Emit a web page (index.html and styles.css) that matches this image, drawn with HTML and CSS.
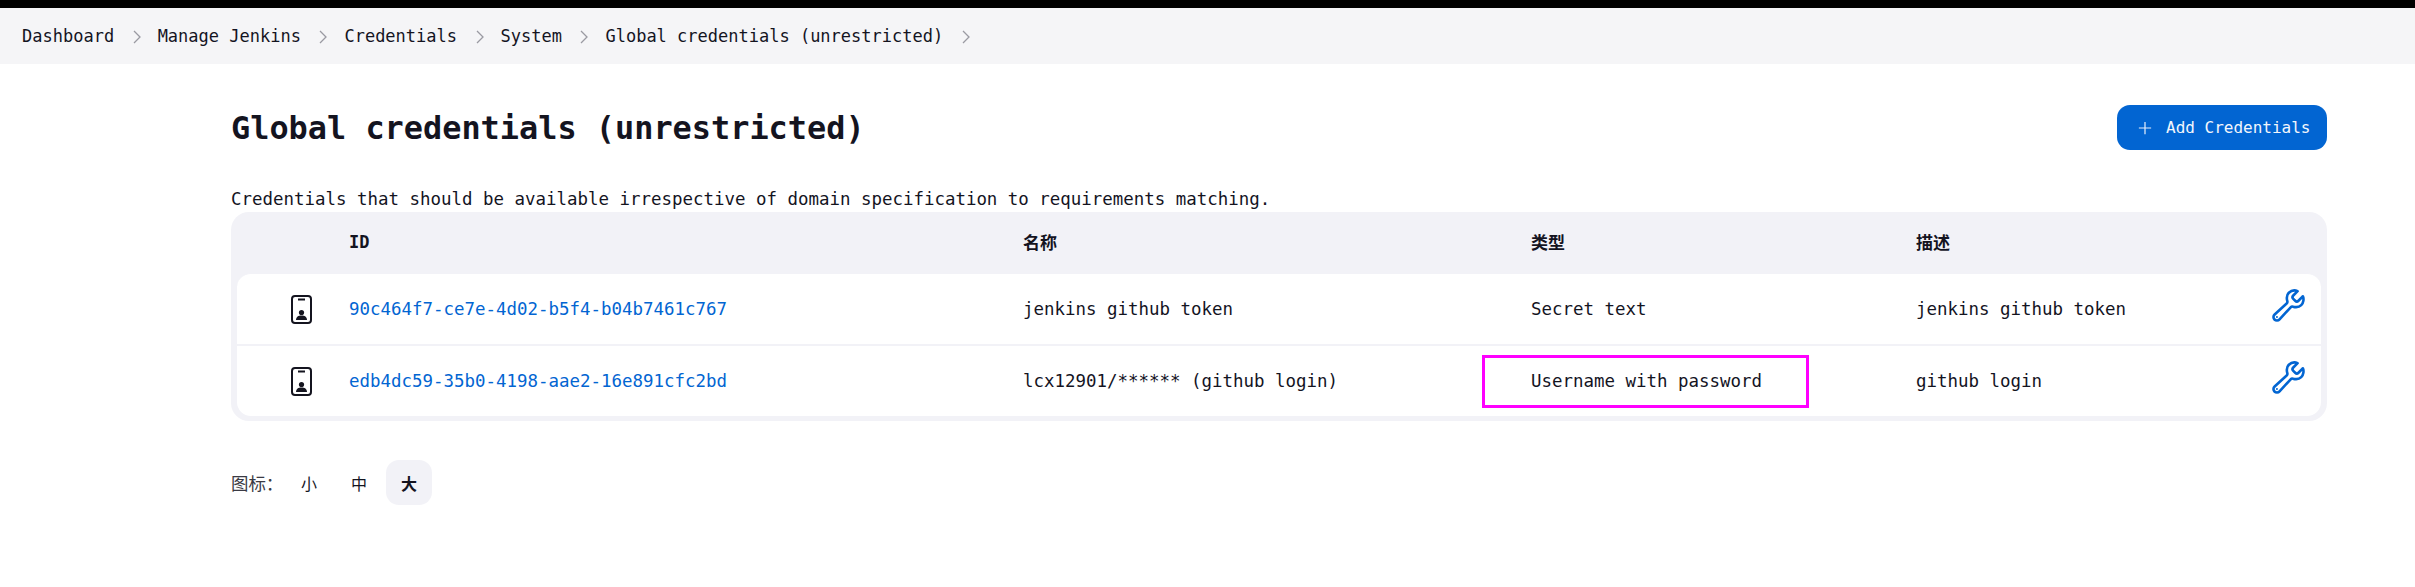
FILE: index.html
```html
<!DOCTYPE html>
<html>

<head>
    <title>Global credentials (unrestricted)</title>
    <link rel="stylesheet" href="styles.css">
</head>

<body>
    <div class="topbar"></div>

    <div class="breadcrumbs">
        <a>Dashboard</a>
        <svg class="crumb-arrow" viewBox="0 0 12 18"><path d="M3 3l6 6-6 6"/></svg>
        <a>Manage Jenkins</a>
        <svg class="crumb-arrow" viewBox="0 0 12 18"><path d="M3 3l6 6-6 6"/></svg>
        <a>Credentials</a>
        <svg class="crumb-arrow" viewBox="0 0 12 18"><path d="M3 3l6 6-6 6"/></svg>
        <a>System</a>
        <svg class="crumb-arrow" viewBox="0 0 12 18"><path d="M3 3l6 6-6 6"/></svg>
        <a>Global credentials (unrestricted)</a>
        <svg class="crumb-arrow" viewBox="0 0 12 18"><path d="M3 3l6 6-6 6"/></svg>
    </div>

    <div class="main">
        <div class="app-bar">
            <h1>Global credentials (unrestricted)</h1>
            <a class="add-button">
                <svg class="plus" viewBox="0 0 16 16"><path d="M8 1v14M1 8h14"/></svg>
                Add Credentials
            </a>
        </div>

        <p class="description">Credentials that should be available irrespective of domain specification to requirements matching.</p>

        <div class="table-box">
            <table>
                <colgroup>
                    <col class="col-icon">
                    <col class="col-id">
                    <col class="col-name">
                    <col class="col-type">
                    <col class="col-desc">
                    <col class="col-action">
                </colgroup>
                <thead>
                    <tr>
                        <th></th>
                        <th>ID</th>
                        <th>名称</th>
                        <th>类型</th>
                        <th>描述</th>
                        <th></th>
                    </tr>
                </thead>
                <tbody>
                    <tr>
                        <td class="icon-cell">
                            <svg class="id-icon" viewBox="0 0 21 29">
                                <rect x="1" y="1" width="19" height="27" rx="3"/>
                                <path d="M7 4.5h7"/>
                                <circle cx="10.500" cy="17.5" r="2.6"/>
                                <path class="solid" d="M5 25c0-3.2 2.4-4.6 5.5-4.6S16 21.800 16 25z"/>
                            </svg>
                        </td>
                        <td><a class="link">90c464f7-ce7e-4d02-b5f4-b04b7461c767</a></td>
                        <td>jenkins github token</td>
                        <td>Secret text</td>
                        <td>jenkins github token</td>
                        <td class="action-cell">
                            <svg class="wrench" viewBox="0 0 512 512">
                                <path d="M393.87 190a32.1 32.1 0 01-45.25 0l-26.57-26.57a32.09 32.09 0 010-45.26L382.19 58a1 1 0 00-.3-1.64c-38.82-16.64-89.15-8.16-121.11 23.57-30.58 30.35-32.32 76-21.12 115.84a31.93 31.93 0 01-9.06 32.08L64 380a48.17 48.17 0 1068 68l153.86-167a31.93 31.93 0 0131.6-9.13c39.54 10.59 84.54 8.6 114.72-21.19 32.49-32 38.72-88.93 22.93-120.63a1 1 0 00-1.85-.42z"/>
                                <circle class="solid" cx="96" cy="416" r="14"/>
                            </svg>
                        </td>
                    </tr>
                    <tr>
                        <td class="icon-cell">
                            <svg class="id-icon" viewBox="0 0 21 29">
                                <rect x="1" y="1" width="19" height="27" rx="3"/>
                                <path d="M7 4.5h7"/>
                                <circle cx="10.500" cy="17.5" r="2.6"/>
                                <path class="solid" d="M5 25c0-3.2 2.4-4.6 5.5-4.6S16 21.800 16 25z"/>
                            </svg>
                        </td>
                        <td><a class="link">edb4dc59-35b0-4198-aae2-16e891cfc2bd</a></td>
                        <td>lcx12901/****** (github login)</td>
                        <td class="marked">Username with password<span class="highlight"></span></td>
                        <td>github login</td>
                        <td class="action-cell">
                            <svg class="wrench" viewBox="0 0 512 512">
                                <path d="M393.87 190a32.1 32.1 0 01-45.25 0l-26.57-26.57a32.09 32.09 0 010-45.26L382.19 58a1 1 0 00-.3-1.64c-38.82-16.64-89.15-8.16-121.11 23.57-30.58 30.35-32.32 76-21.12 115.84a31.93 31.93 0 01-9.06 32.08L64 380a48.17 48.17 0 1068 68l153.86-167a31.93 31.93 0 0131.6-9.13c39.54 10.59 84.54 8.6 114.72-21.19 32.49-32 38.72-88.93 22.93-120.63a1 1 0 00-1.85-.42z"/>
                                <circle class="solid" cx="96" cy="416" r="14"/>
                            </svg>
                        </td>
                    </tr>
                </tbody>
            </table>
        </div>

        <div class="icon-sizes">
            <span class="sizes-label">图标：</span>
            <a class="size">小</a>
            <a class="size">中</a>
            <a class="size current">大</a>
        </div>
    </div>
</body>

</html>
```

FILE: styles.css
```css
body {
    margin: 0;
    background: #fff;
    color: #14141f;
    font-family: "DejaVu Sans Mono", "Noto Sans CJK SC", monospace;
    font-size: 17.45px;
}

.topbar {
    height: 8px;
    background: #000;
}

.breadcrumbs {
    display: flex;
    align-items: center;
    height: 56px;
    padding-left: 22px;
    background: #f5f5f7;
    font-size: 17px;
}

.crumb-arrow {
    width: 12px;
    height: 18px;
    margin: 2px 15px 0 16.5px;
    fill: none;
    stroke: #9a9aa2;
    stroke-width: 1.3;
}

.main {
    padding: 0 88px 0 231px;
}

.app-bar {
    display: flex;
    align-items: center;
    justify-content: space-between;
    height: 45px;
    padding-top: 41px;
}

h1 {
    margin: 0;
    font-size: 31.9px;
    font-weight: 700;
}

.add-button {
    display: flex;
    align-items: center;
    gap: 14px;
    width: 210px;
    height: 45px;
    box-sizing: border-box;
    padding-left: 21px;
    border-radius: 13px;
    background: #0265d2;
    color: #f2f6fc;
    font-size: 16px;
}

.plus {
    width: 14px;
    height: 14px;
    fill: none;
    stroke: #e6eefa;
    stroke-width: 1.4;
}

.description {
    margin: 37px 0 0;
    line-height: 24px;
}

.table-box {
    margin-top: 1px;
    padding: 0 6px 5px;
    border-radius: 18px;
    background: #f2f2f7;
}

table {
    width: 100%;
    table-layout: fixed;
    border-collapse: separate;
    border-spacing: 0;
}

.col-icon { width: 112px; }
.col-id { width: 674px; }
.col-name { width: 508px; }
.col-type { width: 385px; }
.col-action { width: 70px; }

th {
    height: 59px;
    padding: 0 0 2px;
    text-align: left;
    font-weight: 700;
    font-size: 17px;
}

td {
    height: 70px;
    padding: 0;
    background: #fff;
    border-top: 1px solid #f2f2f7;
}

tbody tr + tr td {
    border-top: 2px solid #f2f2f7;
}

tbody tr:first-child td:first-child { border-top-left-radius: 14px; }
tbody tr:first-child td:last-child { border-top-right-radius: 14px; }
tbody tr:last-child td:first-child { border-bottom-left-radius: 14px; }
tbody tr:last-child td:last-child { border-bottom-right-radius: 14px; }

.link {
    color: #0265d2;
}

.icon-cell {
    padding-left: 54px;
}

.id-icon {
    display: block;
    width: 21px;
    height: 29px;
    fill: none;
    stroke: #14141f;
    stroke-width: 2;
}

.id-icon .solid,
.id-icon circle {
    fill: #14141f;
    stroke: none;
}

.action-cell {
    padding-left: 19px;
}

.wrench {
    display: block;
    width: 37px;
    height: 37px;
    margin-top: -7px;
    fill: none;
    stroke: #0265d2;
    stroke-width: 36;
}

.wrench .solid {
    fill: #0265d2;
    stroke: none;
}

.marked {
    position: relative;
}

/* annotation drawn over the screenshot */
.highlight {
    position: absolute;
    left: -49px;
    top: 9px;
    width: 321px;
    height: 47px;
    border: 3px solid #ff00ff;
}

.icon-sizes {
    display: flex;
    align-items: center;
    margin-top: 39px;
}

.sizes-label {
    width: 55px;
    color: #3a3a44;
}

.size {
    display: flex;
    align-items: center;
    justify-content: center;
    width: 46px;
    height: 45px;
    margin-right: 4px;
    border-radius: 13px;
    font-size: 16px;
}

.size.current {
    background: #f2f2f7;
    font-weight: 700;
}
```
